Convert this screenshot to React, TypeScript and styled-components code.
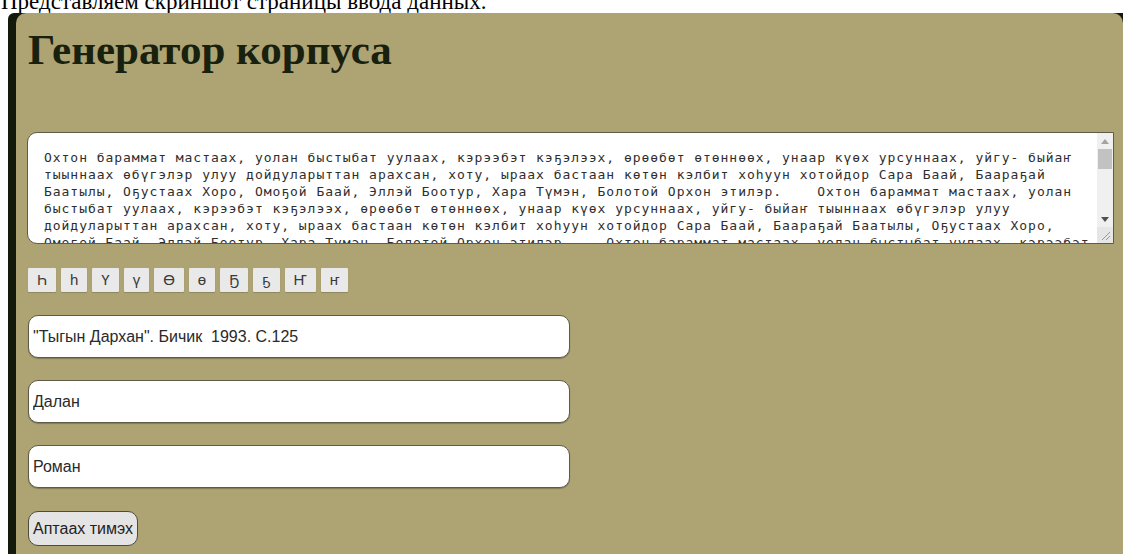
import React from "react";
import styled, { createGlobalStyle } from "styled-components";

const GlobalStyle = createGlobalStyle`
  html, body {
    margin: 0;
    padding: 0;
    background: #ffffff;
  }
  body {
    overflow: hidden;
  }
`;

const Caption = styled.div`
  height: 13px;
  overflow: hidden;
  display: flex;
  align-items: flex-end;
  padding-left: 1px;
  font-family: "Liberation Serif", "Times New Roman", serif;
  font-size: 23px;
  line-height: 1;
  color: #000;
  white-space: nowrap;
`;

const Frame = styled.div`
  margin-left: 8px;
  padding-left: 8px;
  min-height: calc(100vh - 13px);
  background: #141a0b;
  border-radius: 6px 0 0 0;
  display: flex;
`;

const Panel = styled.main`
  flex: 1;
  background: #ada373;
  border-radius: 10px 10px 0 0;
  padding: 12px 9px 0 12px;
  display: flex;
  flex-direction: column;
  align-items: flex-start;
`;

const Title = styled.h1`
  margin: 0 0 57px;
  font-family: "Liberation Serif", "Times New Roman", serif;
  font-weight: 700;
  font-size: 43px;
  line-height: 50px;
  color: #18200e;
`;

const TextBox = styled.div`
  position: relative;
  margin: 0 0 24px -1px;
`;

const CorpusText = styled.textarea`
  display: block;
  box-sizing: border-box;
  width: 1087px;
  height: 112px;
  margin: 0;
  padding: 16px 20px 0 16px;
  border: 1px solid #5f5b49;
  border-radius: 10px 0 0 10px;
  background: #ffffff;
  color: #2e2e2e;
  font-family: "DejaVu Sans Mono", monospace;
  font-size: 13px;
  letter-spacing: 0.96px;
  line-height: 17px;
  resize: none;
  overflow: hidden;
  outline: none;
`;

/* Classic scrollbar drawn over the right edge of the text box */
const ScrollRail = styled.div`
  position: absolute;
  top: 1px;
  right: 1px;
  bottom: 1px;
  width: 16px;
  background: #f0f0f0;
  display: grid;
  grid-template-rows: 16px 20px 1fr 16px 16px;
  justify-items: center;
  align-items: center;
`;

const ScrollThumb = styled.div`
  width: 14px;
  height: 20px;
  background: #c2c2c2;
`;

const ResizeGrip = styled.div`
  width: 16px;
  height: 16px;
  background: #e6e6e6;
  display: flex;
  align-items: center;
  justify-content: center;
`;

const LetterBar = styled.div`
  display: flex;
  gap: 5px;
  margin-bottom: 23px;
`;

const LetterKey = styled.button`
  height: 24px;
  padding: 0 9px;
  border: none;
  border-radius: 1px;
  background: #e9e9e9;
  box-shadow: 0 1px 1px rgba(0, 0, 0, 0.18);
  color: #3a3a3a;
  font-family: "Liberation Sans", Arial, "DejaVu Sans", sans-serif;
  font-size: 15px;
  line-height: 24px;
  cursor: pointer;
`;

const FieldStack = styled.div`
  display: flex;
  flex-direction: column;
  gap: 22px;
  margin-bottom: 23px;
`;

const Field = styled.input`
  box-sizing: border-box;
  width: 542px;
  height: 43px;
  padding: 0 4px;
  border: 1px solid #5e5a48;
  border-radius: 10px;
  background: #ffffff;
  box-shadow: 0 1px 1px rgba(0, 0, 0, 0.25);
  color: #2a2a2a;
  font-family: "Liberation Sans", Arial, sans-serif;
  font-size: 16px;
  outline: none;
`;

const SubmitButton = styled.button`
  box-sizing: border-box;
  height: 35px;
  padding: 0 4px;
  border: 1px solid #4f4b3c;
  border-radius: 10px;
  background: #e4e4e4;
  color: #222;
  font-family: "Liberation Sans", Arial, sans-serif;
  font-size: 16px;
  cursor: pointer;
`;

const paragraph =
  "Охтон бараммат мастаах, уолан быстыбат уулаах, кэрээбэт кэҕэлээх, өрөөбөт өтөннөөх, унаар күөх урсуннаах, уйгу- быйаҥ тыыннаах өбүгэлэр улуу дойдуларыттан арахсан, хоту, ыраах бастаан көтөн кэлбит хоһуун хотойдор Сара Баай, Баараҕай Баатылы, Оҕустаах Хоро, Омоҕой Баай, Эллэй Боотур, Хара Түмэн, Болотой Орхон этилэр.";

const corpus = [paragraph, paragraph, paragraph].join("    ");

const letters = ["Һ", "һ", "Ү", "ү", "Ө", "ө", "Ҕ", "ҕ", "Ҥ", "ҥ"];

function Arrow({ down }: { down?: boolean }) {
  return (
    <svg width="8" height="5" viewBox="0 0 8 5">
      <path d={down ? "M0 0h8L4 5z" : "M0 5h8L4 0z"} fill={down ? "#505050" : "#a3a3a3"} />
    </svg>
  );
}

export default function App() {
  return (
    <>
      <GlobalStyle />
      <Caption>Представляем скриншот страницы ввода данных.</Caption>
      <Frame>
        <Panel>
          <Title>Генератор корпуса</Title>
          <TextBox>
            <CorpusText defaultValue={corpus} spellCheck={false} />
            <ScrollRail>
              <Arrow />
              <ScrollThumb />
              <span />
              <Arrow down />
              <ResizeGrip>
                <svg width="12" height="12" viewBox="0 0 12 12">
                  <path d="M11 3L3 11M11 7L7 11" stroke="#9a9a9a" strokeWidth="1" />
                </svg>
              </ResizeGrip>
            </ScrollRail>
          </TextBox>
          <LetterBar>
            {letters.map((ch) => (
              <LetterKey key={ch} type="button">
                {ch}
              </LetterKey>
            ))}
          </LetterBar>
          <FieldStack>
            <Field defaultValue={'"Тыгын Дархан". Бичик  1993. С.125'} />
            <Field defaultValue="Далан" />
            <Field defaultValue="Роман" />
          </FieldStack>
          <SubmitButton type="button">Аптаах тимэх</SubmitButton>
        </Panel>
      </Frame>
    </>
  );
}
